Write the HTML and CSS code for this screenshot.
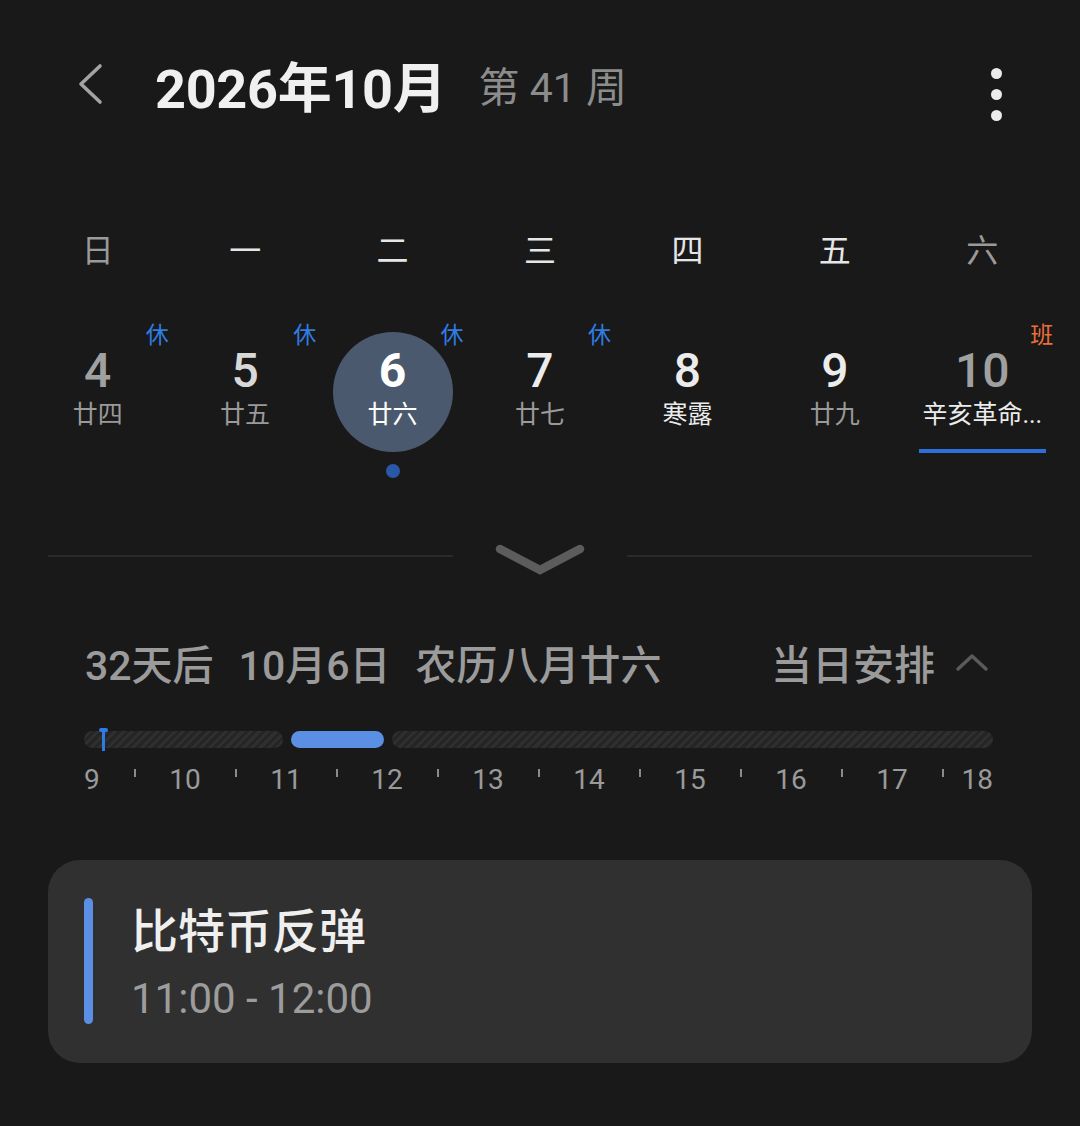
FILE: index.html
```html
<!DOCTYPE html>
<html lang="zh-CN">
<head>
  <meta charset="UTF-8" />
  <meta name="viewport" content="width=device-width, initial-scale=1.0"/>
  <title>2026年10月</title>
  <link rel="stylesheet" href="styles.css">
</head>
<body>
  <header class="topbar">
    <svg class="back" width="26" height="44" viewBox="0 0 26 44">
      <path d="M23 4 L4 22 L23 40" fill="none" stroke="#a3a3a3" stroke-width="3.6" stroke-linecap="round" stroke-linejoin="round"/>
    </svg>
    <h1 class="month">2026年10月</h1>
    <span class="week">第 41 周</span>
    <div class="more">
      <span></span><span></span><span></span>
    </div>
  </header>

  <div class="weekdays">
    <span class="weekend">日</span>
    <span>一</span>
    <span>二</span>
    <span>三</span>
    <span>四</span>
    <span>五</span>
    <span class="weekend">六</span>
  </div>

  <div class="days">
    <div class="cell weekend">
      <span class="tag rest">休</span>
      <div class="day"><span class="num">4</span><span class="lunar">廿四</span></div>
    </div>
    <div class="cell">
      <span class="tag rest">休</span>
      <div class="day"><span class="num dim">5</span><span class="lunar">廿五</span></div>
    </div>
    <div class="cell selected">
      <span class="tag rest">休</span>
      <div class="day"><span class="num">6</span><span class="lunar">廿六</span></div>
      <span class="event-dot"></span>
    </div>
    <div class="cell">
      <span class="tag rest">休</span>
      <div class="day"><span class="num">7</span><span class="lunar">廿七</span></div>
    </div>
    <div class="cell">
      <div class="day"><span class="num">8</span><span class="lunar festival">寒露</span></div>
    </div>
    <div class="cell">
      <div class="day"><span class="num">9</span><span class="lunar">廿九</span></div>
    </div>
    <div class="cell weekend today">
      <span class="tag work">班</span>
      <div class="day"><span class="num">10</span><span class="lunar festival">辛亥革命...</span></div>
      <span class="underline"></span>
    </div>
  </div>

  <div class="divider">
    <span class="line"></span>
    <svg class="expand" width="96" height="34" viewBox="0 0 96 34">
      <path d="M8 8 L48 29 L88 8" fill="none" stroke="#5c5c5c" stroke-width="8.5" stroke-linecap="round" stroke-linejoin="miter"/>
    </svg>
    <span class="line"></span>
  </div>

  <section class="agenda">
    <div class="info">
      <span>32天后</span>
      <span>10月6日</span>
      <span>农历八月廿六</span>
      <span class="plan">当日安排</span>
      <svg class="collapse" width="34" height="20" viewBox="0 0 34 20">
        <path d="M3 17 L17 4 L31 17" fill="none" stroke="#5a5a5a" stroke-width="3.5" stroke-linecap="round" stroke-linejoin="round"/>
      </svg>
    </div>

    <div class="timeline">
      <div class="bar">
        <span class="seg free"></span>
        <span class="seg busy"></span>
        <span class="seg free"></span>
        <span class="now"></span>
      </div>
      <div class="hours">
        <span class="first">9</span><i></i>
        <span>10</span><i></i>
        <span>11</span><i></i>
        <span>12</span><i></i>
        <span>13</span><i></i>
        <span>14</span><i></i>
        <span>15</span><i></i>
        <span>16</span><i></i>
        <span>17</span><i></i>
        <span class="last">18</span>
      </div>
    </div>

    <div class="event">
      <span class="stripe"></span>
      <div class="event-body">
        <div class="event-title">比特币反弹</div>
        <div class="event-time">11:00 - 12:00</div>
      </div>
    </div>
  </section>
</body>
</html>
```

FILE: styles.css
```css
body {
  margin: 0;
  background: #191919;
  color: #e8e8e8;
  font-family: Roboto, "Noto Sans CJK SC", sans-serif;
}

/* header */
.topbar {
  display: flex;
  align-items: center;
  height: 168px;
  padding: 0 78px 0 77px;
}

.back { flex: none; }

.month {
  margin: 0 0 0 52px;
  font-size: 54px;
  font-weight: 700;
  color: #f0f0f0;
  letter-spacing: -0.3px;
}

.week {
  margin-left: 32px;
  font-size: 41px;
  color: #8c8c8c;
}

.more {
  margin-left: auto;
  margin-top: 20px;
  display: flex;
  flex-direction: column;
  gap: 10px;
}

.more span {
  width: 11px;
  height: 11px;
  border-radius: 50%;
  background: #ebebeb;
}

/* weekdays */
.weekdays {
  display: grid;
  grid-template-columns: repeat(7, 1fr);
  padding: 0 24px;
  margin-top: 50px;
  height: 60px;
  align-items: center;
  text-align: center;
  font-size: 32px;
  color: #e6e6e6;
}

.weekdays .weekend { color: #9a9a9a; }

/* days */
.days {
  display: grid;
  grid-template-columns: repeat(7, 1fr);
  padding: 0 24px;
  margin-top: 32px;
}

.cell {
  position: relative;
  height: 170px;
  display: flex;
  flex-direction: column;
  align-items: center;
}

.day {
  width: 120px;
  height: 120px;
  margin-top: 22px;
  border-radius: 50%;
  display: flex;
  flex-direction: column;
  align-items: center;
  white-space: nowrap;
}

.num {
  margin-top: 14px;
  font-size: 48px;
  line-height: 50px;
  font-weight: 500;
  color: #ececec;
}

.num.dim { color: #d8d8d8; }

.lunar {
  margin-top: 3px;
  font-size: 25px;
  line-height: 32px;
  color: #9a9a9a;
}

.lunar.festival { color: #ececec; }

.weekend .num { color: #a0a0a0; }

.selected .day { background: #4b596e; }
.selected .num { color: #ffffff; font-weight: 700; }
.selected .lunar { color: #ffffff; }

.tag {
  position: absolute;
  top: 13px;
  left: calc(50% + 48px);
  font-size: 23px;
  line-height: 26px;
}

.tag.rest { color: #2f7de4; }
.tag.work { color: #ec6f3c; }

.event-dot {
  position: absolute;
  top: 154px;
  width: 14px;
  height: 14px;
  border-radius: 50%;
  background: #2a58a6;
}

.underline {
  position: absolute;
  top: 139px;
  width: 127px;
  height: 4px;
  background: #2c6fd8;
}

/* divider */
.divider {
  display: flex;
  align-items: center;
  padding: 0 48px;
  margin-top: 56px;
  height: 40px;
}

.divider .line {
  flex: 1;
  height: 2px;
  background: #2a2a2a;
}

.expand {
  margin: 0 39px;
  position: relative;
  top: 2px;
}

/* agenda */
.agenda { padding: 0 48px; }

.info {
  display: flex;
  align-items: center;
  height: 60px;
  margin-top: 56px;
  padding-left: 37px;
  font-size: 41px;
  font-weight: 500;
  color: #9b9b9b;
}

.info span { margin-right: 25px; }

.info .plan {
  margin-left: auto;
  margin-right: 20px;
}

.collapse { margin-right: 43px; }

.timeline {
  margin: 39px 39px 0 36px;
}

.bar {
  position: relative;
  display: grid;
  grid-template-columns: 199px 93px 1fr;
  column-gap: 8px;
  height: 17px;
}

.seg { border-radius: 9px; }

.seg.free {
  background: repeating-linear-gradient(135deg, #252525 0 3px, #2f2f2f 3px 6px);
}

.seg.busy { background: #5b8fe3; }

.now {
  position: absolute;
  left: 18px;
  top: -3px;
  width: 3px;
  height: 23px;
  background: #2e7ae6;
}

.now::before {
  content: "";
  position: absolute;
  left: -3px;
  top: 0;
  width: 9px;
  height: 4px;
  border-radius: 2px;
  background: #2e7ae6;
}

.hours {
  display: flex;
  justify-content: space-between;
  margin-top: 17px;
  height: 30px;
  font-size: 28px;
  line-height: 30px;
  color: #9a9a9a;
}

.hours span {
  width: 0;
  display: flex;
  justify-content: center;
}

.hours span.first { justify-content: flex-start; }
.hours span.last { justify-content: flex-end; }

.hours i {
  width: 2px;
  height: 8px;
  margin-top: 4px;
  background: #8a8a8a;
}

/* event card */
.event {
  display: flex;
  margin-top: 65px;
  padding: 38px 36px 39px;
  background: #303030;
  border-radius: 32px;
}

.stripe {
  width: 9px;
  border-radius: 5px;
  background: #5b8fe3;
}

.event-body {
  margin-left: 38px;
  padding-top: 6px;
}

.event-title {
  font-size: 47px;
  line-height: 56px;
  font-weight: 500;
  color: #efefef;
}

.event-time {
  margin-top: 14px;
  font-size: 42px;
  line-height: 50px;
  color: #9c9c9c;
}
```
